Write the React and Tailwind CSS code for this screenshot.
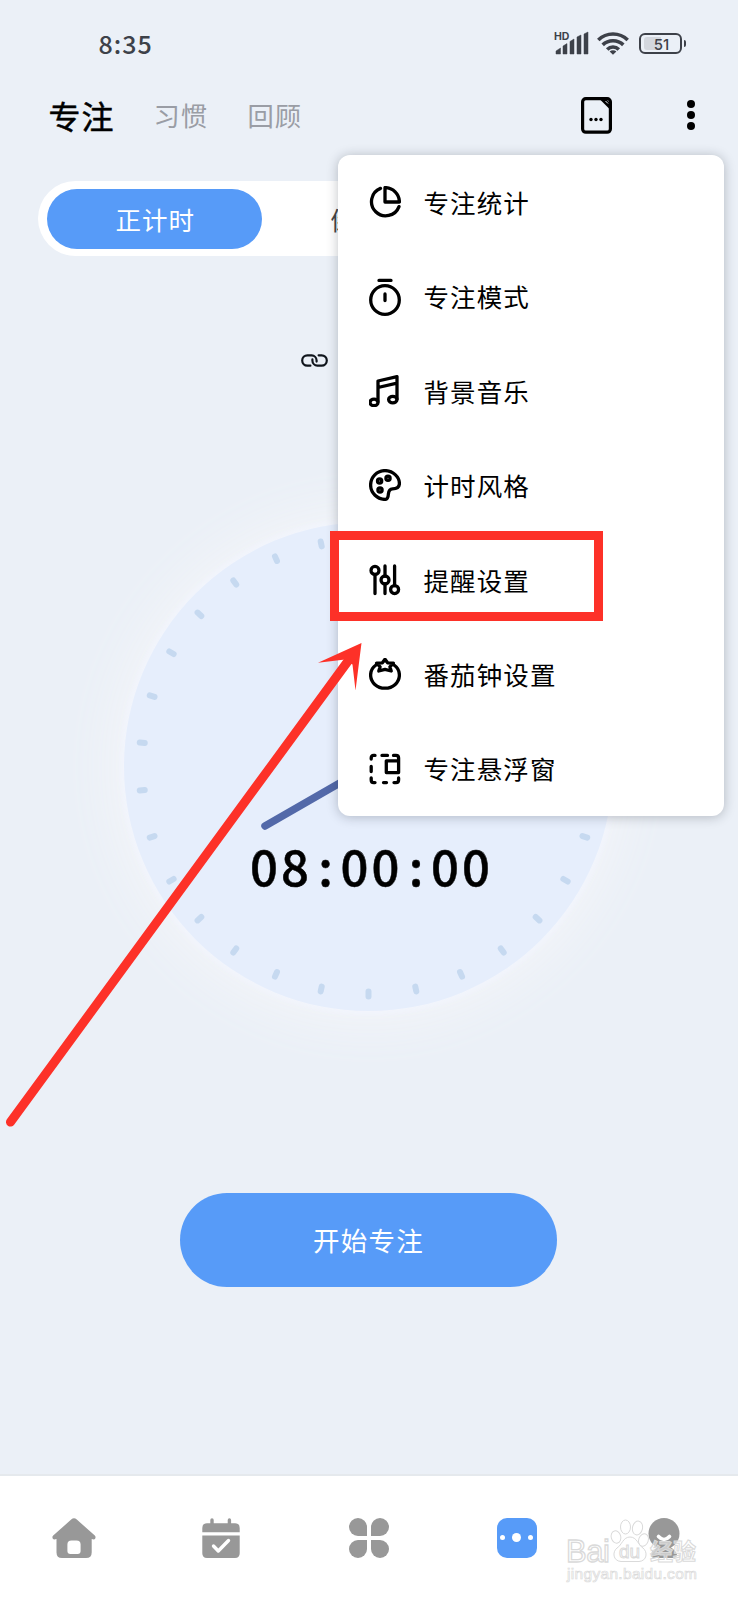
import React, { useState } from 'react';

const stroke = {
    fill: 'none',
    stroke: 'currentColor',
    strokeWidth: 3.3,
    strokeLinecap: 'round',
    strokeLinejoin: 'round',
};

const StatsIcon = () => (
    <svg width="32" height="32" viewBox="0 0 32 32" {...stroke}>
        <path d="M11.5 2.4A14.2 14.2 0 1 0 30 20.6" />
        <path d="M16 1.6V16H30.4A14.4 14.4 0 0 0 16 1.6Z" />
    </svg>
);

const TimerIcon = () => (
    <svg width="32" height="38" viewBox="0 0 32 38" {...stroke}>
        <circle cx="16" cy="22" r="14.3" />
        <path d="M10 2.4H22M16 16V22.5" />
    </svg>
);

const MusicIcon = () => (
    <svg width="32" height="32" viewBox="0 0 32 32" {...stroke}>
        <path d="M9 26.5V6L28 1.7V24M9 12.5L28 8.2" />
        <ellipse cx="5" cy="27.4" rx="4" ry="3.2" />
        <ellipse cx="23.8" cy="24.6" rx="4.2" ry="3.2" />
    </svg>
);

const PaletteIcon = () => (
    <svg width="32" height="32" viewBox="0 0 32 32" {...stroke}>
        <path d="M16.6 30.4C8.4 30.6 1.6 24 1.6 16S8 1.6 16 1.6S30.4 8 30.4 14.5C30.4 18.4 27.5 19.8 23.5 19.8C20.5 19.8 19.7 22 19.4 25C19.2 28 18.7 30 16.6 30.4Z" />
        <circle cx="10.6" cy="12" r="2.1" />
        <circle cx="19" cy="9.2" r="2.1" />
        <circle cx="11" cy="21" r="2.1" />
    </svg>
);

const SlidersIcon = () => (
    <svg width="32" height="32" viewBox="0 0 32 32" {...stroke}>
        <circle cx="6" cy="6.4" r="4" />
        <circle cx="16" cy="16" r="4" />
        <circle cx="25.6" cy="25.6" r="4" />
        <path d="M6 11V29.5M16 2V12M16 20V29.5M25.6 2V21.5" />
    </svg>
);

const TomatoIcon = () => (
    <svg width="32" height="32" viewBox="0 0 32 32" {...stroke}>
        <path d="M7 7C3.6 9.4 1.6 12.8 1.6 17C1.6 24.5 8 30.2 16 30.2S30.4 24.5 30.4 17C30.4 12.8 28.4 9.4 25 7" />
        <path d="M16 1.2L18.6 4.8L24.4 5.2L20.9 8.8L22.2 13L16 11.4L9.8 13L11.1 8.8L7.6 5.2L13.4 4.8Z" />
    </svg>
);

const FloatIcon = () => (
    <svg width="32" height="32" viewBox="0 0 32 32" {...stroke}>
        <path d="M2.2 6V5Q2.2 2.4 4.6 2.4H6M13 2.4H18.5M24.5 2.4H27Q29.6 2.4 29.6 5V19.6H17.3V7.8H29M2.2 13.5V18.5M2.2 25V27Q2.2 29.6 4.6 29.6H6M14.5 29.6H17.5M25 29.6H27Q29.6 29.6 29.6 27V25" />
    </svg>
);

const menuItems = [
    { label: '专注统计', Icon: StatsIcon },
    { label: '专注模式', Icon: TimerIcon },
    { label: '背景音乐', Icon: MusicIcon },
    { label: '计时风格', Icon: PaletteIcon },
    { label: '提醒设置', Icon: SlidersIcon },
    { label: '番茄钟设置', Icon: TomatoIcon },
    { label: '专注悬浮窗', Icon: FloatIcon },
];

const StatusBar = () => (
    <div className="flex h-[86px] items-center justify-between pl-[98.5px] pr-[52px] text-[#3d4149]">
        <span className="text-[25px] font-medium leading-none tracking-[1px]">8:35</span>
        <div className="flex items-center">
            <svg width="36" height="24" viewBox="0 0 36 24" fill="currentColor">
                <text x="0" y="8.5" fontSize="10.5" fontWeight="700" fontFamily="Inter, sans-serif">HD</text>
                <path d="M2 20L6.5 17V23H2ZM9 15L13 12.6V23H9ZM16 10.4L20 8V23H16ZM23 6L27 4V23H23ZM30 3L34 1V23H30Z" stroke="currentColor" strokeWidth=".5" strokeLinejoin="round" />
            </svg>
            <svg className="ml-[7px]" width="32" height="24" viewBox="0 0 32 24" fill="none" stroke="currentColor" strokeWidth="3.6">
                <path d="M1.3 9C9.5 1 22.5 1 30.7 9M5.7 13.9C11.4 8.4 20.6 8.4 26.3 13.9M10.2 18.4C13.4 15.2 18.6 15.2 21.8 18.4" />
                <path d="M12.6 20.6C14.6 18.8 17.4 18.8 19.4 20.6L16 23.8Z" fill="currentColor" stroke="none" />
            </svg>
            <div className="relative ml-[10px] flex h-[21px] w-[43px] items-center justify-center rounded-[6px] border-2 border-current">
                <div className="absolute bottom-[2px] left-[3px] top-[2px] w-[17px] rounded-l-[3px] bg-[#d3d7de]" />
                <span className="relative left-[1px] top-[1px] font-[Inter,sans-serif] text-[15px] font-medium leading-none">51</span>
            </div>
            <div className="ml-[2px] h-[7px] w-[2px] rounded-r bg-current" />
        </div>
    </div>
);

const Header = () => (
    <div className="flex h-[58px] items-center pl-[48.5px]">
        <span className="w-[105px] text-[32px] leading-none tracking-[1px] text-black [-webkit-text-stroke:0.5px_#000]">专注</span>
        <span className="w-[94px] text-[26.3px] leading-none tracking-[1px] text-[#9a9da5]">习惯</span>
        <span className="text-[26.3px] leading-none tracking-[1px] text-[#9a9da5]">回顾</span>
        <svg className="ml-auto" width="31" height="37" viewBox="0 0 31 37">
            <rect x="1.6" y="1.6" width="27.8" height="33.6" rx="3.2" fill="none" stroke="#000" strokeWidth="3.2" />
            <path d="M18.5 2H25L29 6V12.5Z" fill="#000" />
            <path d="M24.5 4L27 6.5" stroke="#ebf0f7" strokeWidth="1" />
            <g fill="#000">
                <circle cx="10" cy="22.5" r="1.7" />
                <circle cx="15" cy="22.5" r="1.7" />
                <circle cx="20" cy="22.5" r="1.7" />
            </g>
        </svg>
        <div className="ml-[75px] mr-[43px] flex flex-col gap-[3.4px]">
            <i className="size-[8px] rounded-full bg-black" />
            <i className="size-[8px] rounded-full bg-black" />
            <i className="size-[8px] rounded-full bg-black" />
        </div>
    </div>
);

const Clock = () => {
    const ticks = Array.from({ length: 30 }, (_, i) => i * 12);

    return (
        <div className="relative ml-[124px] mt-[155px] size-[489px] rounded-full bg-[#e6eefc] shadow-[0_0_6px_3px_#f2f5fd,0_0_46px_16px_#f2f4f8]">
            <svg width="489" height="489" viewBox="-244.5 -244.5 489 489">
                {ticks.map((deg) => (
                    <line key={deg} x1="0" y1="-230" x2="0" y2="-225" stroke="#c6d9f0" strokeWidth="6" strokeLinecap="round" transform={`rotate(${deg})`} />
                ))}
                <line x1="0" y1="0" x2="-103.5" y2="59.5" stroke="#5369a9" strokeWidth="7.5" strokeLinecap="round" />
            </svg>
            <div className="absolute left-[126px] top-[315px] flex text-[49px] font-medium leading-[56px] text-black [-webkit-text-stroke:0.5px_#000]">
                <span className="w-[60.5px] tracking-[3px]">08</span>
                <span className="w-[30px] text-center">:</span>
                <span className="w-[60.5px] tracking-[3px]">00</span>
                <span className="w-[30px] text-center">:</span>
                <span className="w-[60.5px] tracking-[3px]">00</span>
            </div>
        </div>
    );
};

const BottomNav = () => (
    <nav className="grid h-[126px] grid-cols-5 justify-items-center border-t-2 border-[#e5e9ed] bg-white pt-[41.5px] text-[#989898]">
        <svg width="44" height="41" viewBox="0 0 44 41" fill="currentColor">
            <path fillRule="evenodd" d="M19.2 1.5Q22 -.8 24.8 1.5L42.8 17.6Q44.2 19 43 21Q42 21.8 39.7 21V34.5Q39.7 40 34 40H10Q4.5 40 4.5 34.5V21Q2 21.8 1 21Q-.3 19 1.2 17.6ZM19.5 22.5Q15.4 22.5 15.4 26.5V33Q15.4 36 18.4 36H25.6Q28.6 36 28.6 33V26.5Q28.6 22.5 24.5 22.5Z" />
        </svg>
        <svg width="38" height="41" viewBox="0 0 38 41">
            <path d="M10 2V8M27.4 2V8" stroke="currentColor" strokeWidth="3.4" strokeLinecap="round" />
            <path d="M.3 14.2V10Q.3 5.3 5 5.3H33Q37.7 5.3 37.7 10V14.2ZM.3 17.4H37.7V35.3Q37.7 40 33 40H5Q.3 40 .3 35.3Z" fill="currentColor" />
            <path d="M11.5 28L16.3 33L26.5 22.5" fill="none" stroke="#fff" strokeWidth="3.4" strokeLinecap="round" strokeLinejoin="round" />
        </svg>
        <div className="grid size-[40px] grid-cols-2 gap-[4px]">
            <i className="rounded-full rounded-br-[2px] bg-current" />
            <i className="rounded-full rounded-bl-[2px] bg-current" />
            <i className="rounded-full rounded-tr-[2px] bg-current" />
            <i className="rounded-full rounded-tl-[2px] bg-current" />
        </div>
        <div className="flex size-[40px] items-center justify-center gap-[7px] rounded-[10px] bg-[#579bf8]">
            <i className="size-[5px] rounded-full bg-white" />
            <i className="size-[9.5px] rounded-full bg-white" />
            <i className="size-[5px] rounded-full bg-white" />
        </div>
        <svg width="40" height="41" viewBox="0 0 40 41">
            <circle cx="20" cy="15.5" r="15.5" fill="currentColor" />
            <path d="M8 34Q20 20 32 34L33 37Q33 40 29 40H11Q7 40 7 37Z" fill="currentColor" />
            <path d="M14.5 18.5Q20 24.5 25.5 18.5" fill="none" stroke="#fff" strokeWidth="3.6" strokeLinecap="round" />
        </svg>
    </nav>
);

const Watermark = () => (
    <svg className="absolute left-[562px] top-[1515px]" width="142" height="72" viewBox="0 0 142 72" fill="#fff" fillOpacity=".5" stroke="#dadada" strokeWidth="1" fontFamily="'Liberation Sans', 'Noto Sans CJK SC', sans-serif">
        <text x="4" y="46.5" fontSize="31" textLength="44" strokeWidth="1.3">Bai</text>
        <ellipse cx="54" cy="22" rx="4.8" ry="6.3" transform="rotate(-15 54 22)" />
        <ellipse cx="63.5" cy="12" rx="5" ry="7" />
        <ellipse cx="75.5" cy="13" rx="5" ry="7" transform="rotate(12 75.5 13)" />
        <ellipse cx="81.5" cy="25" rx="4.8" ry="6.3" transform="rotate(20 81.5 25)" />
        <path d="M68 22C61 22 60 30 55 33C50 37 51 46 59 46.5H77C85 46 86 37 81 33C76 30 75 22 68 22Z" />
        <text x="57" y="43" fontSize="19" textLength="21">du</text>
        <text x="88" y="44.5" fontSize="23" fontWeight="700" fontFamily="'Noto Sans CJK SC', sans-serif" textLength="46">经验</text>
        <text x="5" y="64" fontSize="15.5" strokeWidth=".7" textLength="130">jingyan.baidu.com</text>
    </svg>
);

const App = () => {
    const [menuOpen] = useState(true);

    return (
        <div className="relative flex h-[1600px] w-[738px] flex-col overflow-hidden bg-[#ebf0f7] font-['Noto_Sans_CJK_SC',sans-serif]">
            <StatusBar />
            <Header />

            <div className="mx-[37.5px] mt-[37px] grid h-[75px] grid-cols-3 rounded-full bg-white px-[9.5px] pb-[7px] pt-[8px] text-[25.5px] text-[#444]">
                <div className="flex items-center justify-center rounded-full bg-[#579bf8] pl-[2px] tracking-[1px] text-white">正计时</div>
                <div className="flex items-center justify-center pl-[3px] tracking-[1px]">倒计时</div>
                <div className="flex items-center justify-center pl-[2px] tracking-[1px]">番茄钟</div>
            </div>

            <svg className="ml-[301px] mt-[98px] shrink-0" width="27" height="13" viewBox="0 0 27 13" fill="none" stroke="#10151c" strokeWidth="2.2" strokeLinecap="round">
                <path d="M11.4 7.6V6.5A5.2 5.2 0 0 1 16.4 1.3H20.6A5.2 5.2 0 0 1 20.6 11.7H17.6" transform="matrix(-1 0 0 1 27 0)" />
                <path d="M11.4 5.4V6.5A5.2 5.2 0 0 0 16.4 11.7H20.6A5.2 5.2 0 0 0 20.6 1.3H17.6" />
            </svg>

            <Clock />

            <button className="ml-[180px] mt-[182px] h-[94px] w-[377px] rounded-full bg-[#579bf8] text-[26.5px] tracking-[1.2px] text-white">
                开始专注
            </button>

            <div className="mt-auto">
                <BottomNav />
            </div>

            {menuOpen && (
                <ul className="absolute left-[338px] top-[155px] w-[386px] rounded-[12px] bg-white text-black shadow-[0_1px_12px_rgba(30,35,50,0.28)]">
                    {menuItems.map(({ label, Icon }) => (
                        <li key={label} className="flex h-[94.4px] items-center pl-[31px]">
                            <span className="flex w-[54.5px] items-center"><Icon /></span>
                            <span className="mt-[-1px] text-[25.5px] leading-none tracking-[1.1px]">{label}</span>
                        </li>
                    ))}
                </ul>
            )}

            {/* highlight box and arrow */}
            <div className="absolute left-[330px] top-[530.5px] h-[90.5px] w-[273px] border-[9px] border-[#fd3128]" />
            <svg className="absolute left-0 top-[630px]" width="380" height="510" viewBox="0 630 380 510" fill="#fd3128">
                <path d="M10.5 1122L351 657" stroke="#fd3128" strokeWidth="9" strokeLinecap="round" />
                <path d="M361.5 643L318 662.7L345 659.5L352.5 664.5L355.5 690.5Z" />
            </svg>

            <Watermark />
        </div>
    );
};

export default App;
